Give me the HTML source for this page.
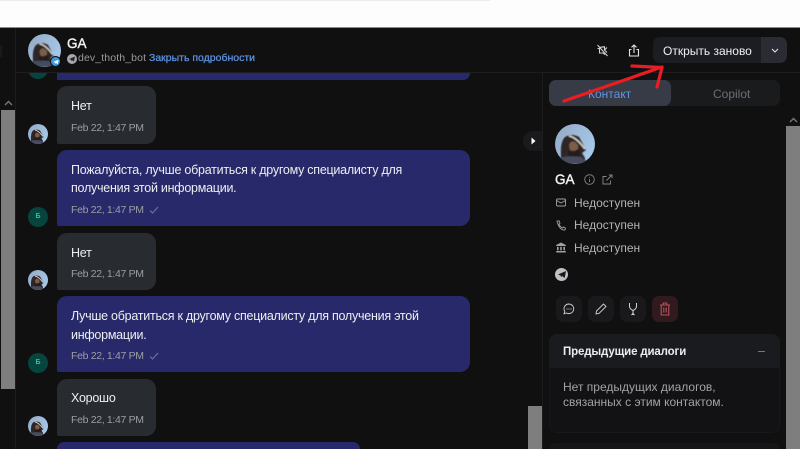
<!DOCTYPE html>
<html lang="ru">
<head>
<meta charset="utf-8">
<style>
html,body{margin:0;padding:0;background:#101011;}
body{width:800px;height:449px;position:relative;overflow:hidden;font-family:"Liberation Sans",sans-serif;color:#e8e8ea;}
.a{position:absolute;}
.t{position:absolute;white-space:nowrap;}
.b{position:absolute;border-radius:10px;}
.in{background:#282b2f;left:57px;width:99px;}
.out{background:#28296a;left:57px;width:413px;}
.msg{font-size:12.5px;line-height:15px;color:#eeeef0;letter-spacing:-.25px;left:71px;}
.time{font-size:10.5px;line-height:13px;color:#9d9ea3;letter-spacing:-.33px;left:71px;}
.sm{position:absolute;left:28px;width:20px;height:20px;}
.bot{position:absolute;left:28px;width:20px;height:20px;border-radius:50%;background:#07443d;color:#1fc79a;font-size:7px;font-weight:bold;text-align:center;line-height:20px;}
.un{font-size:12px;line-height:14px;color:#b2b3b7;left:574px;}
.ab{position:absolute;top:296px;width:26px;height:26px;border-radius:7px;background:#19191b;}
svg{position:absolute;overflow:visible;}
</style>
</head>
<body>
<svg width="0" height="0" style="position:absolute">
<defs>
<clipPath id="c"><circle cx="20" cy="20" r="20"/></clipPath>
<filter id="s"><feGaussianBlur stdDeviation=".6"/></filter>
<linearGradient id="sky" x1="0" y1="0" x2="1" y2=".6"><stop offset="0" stop-color="#93aac3"/><stop offset="1" stop-color="#a6c8ea"/></linearGradient>
<symbol id="av" viewBox="0 0 40 40">
<g clip-path="url(#c)">
<rect width="40" height="40" fill="url(#sky)"/>
<g filter="url(#s)">
<path d="M6 32 Q5 18 10 13 Q17 9 24 13 L28 20 L31 26 L27 29 L30 34 L30 40 L6 40Z" fill="#2f2726"/>
<path d="M14 21 Q16 16 20 18 Q24 20 23 25 Q19 28 15 26Z" fill="#7d5d4a"/>
<path d="M13 26 Q18 31 24 25 L25 31 Q18 35 14 33Z" fill="#231c1b"/>
<path d="M0 40 L3 34 Q14 31 26 33 L36 40Z" fill="#464c5e"/>
<path d="M14 12 Q21 13 30 25" stroke="#d0cbc2" stroke-width="1.800" fill="none"/>
</g>
</g>
</symbol>
</defs>
</svg>

<!-- browser strip -->
<div class="a" style="left:0;top:0;width:800px;height:27px;background:#fdfdfe;"></div>
<div class="a" style="left:0;top:0;width:490px;height:1px;background:#ececef;"></div>
<div class="a" style="left:0;top:27px;width:800px;height:1px;background:#8b8b8d;"></div>

<!-- left rail -->
<div class="a" style="left:15px;top:28px;width:1px;height:421px;background:#1d1d20;"></div>
<div class="a" style="left:1px;top:110px;width:14px;height:279px;background:#7e7e7e;"></div>
<svg style="left:4px;top:100px" width="9" height="6" viewBox="0 0 9 6"><path d="M1 5L4.500 1.500L8 5" stroke="#77777a" stroke-width="1.400" fill="none"/></svg>
<div class="a" style="left:0;top:45px;width:2px;height:12px;background:#1a1a1c;"></div>

<!-- chat messages -->
<div class="a" style="left:28px;top:62px;width:20px;height:17px;overflow:hidden"><div style="width:20px;height:20px;margin-top:-3px;border-radius:50%;background:#07443d"></div></div>
<div class="a" style="left:57px;top:73px;width:413px;height:7px;background:#28296a;border-radius:0 0 8px 0"></div>

<div class="b in" style="top:86px;height:58px;border-bottom-left-radius:2px"></div>
<div class="t msg" style="top:99px">Нет</div>
<div class="t time" style="top:122px">Feb 22, 1:47 PM</div>
<svg class="sm" style="left:28px;top:124px" viewBox="0 0 40 40"><use href="#av"/></svg>

<div class="b out" style="top:150px;height:76px;border-bottom-left-radius:2px"></div>
<div class="t msg" style="top:163px">Пожалуйста, лучше обратиться к другому специалисту для</div>
<div class="t msg" style="top:181px">получения этой информации.</div>
<div class="t time" style="top:204px">Feb 22, 1:47 PM</div>
<svg style="left:149px;top:206px" width="10" height="8" viewBox="0 0 10 8"><path d="M1 4.500L3.500 7L9 1" stroke="#75769c" stroke-width="1" fill="none"/></svg>
<div class="bot" style="top:207px">Б</div>

<div class="b in" style="top:233px;height:57px;border-bottom-left-radius:2px"></div>
<div class="t msg" style="top:246px">Нет</div>
<div class="t time" style="top:268px">Feb 22, 1:47 PM</div>
<svg class="sm" style="left:28px;top:270px" viewBox="0 0 40 40"><use href="#av"/></svg>

<div class="b out" style="top:296px;height:76px;border-bottom-left-radius:2px"></div>
<div class="t msg" style="top:309px">Лучше обратиться к другому специалисту для получения этой</div>
<div class="t msg" style="top:328px">информации.</div>
<div class="t time" style="top:350px">Feb 22, 1:47 PM</div>
<svg style="left:149px;top:352px" width="10" height="8" viewBox="0 0 10 8"><path d="M1 4.500L3.500 7L9 1" stroke="#75769c" stroke-width="1" fill="none"/></svg>
<div class="bot" style="top:353px">Б</div>

<div class="b in" style="top:379px;height:57px;border-bottom-left-radius:2px"></div>
<div class="t msg" style="top:391px">Хорошо</div>
<div class="t time" style="top:414px">Feb 22, 1:47 PM</div>
<svg class="sm" style="left:28px;top:416px" viewBox="0 0 40 40"><use href="#av"/></svg>

<div class="a" style="left:57px;top:442px;width:303px;height:7px;background:#28296a;border-radius:8px 8px 0 0"></div>

<!-- chat scrollbar -->
<div class="a" style="left:528px;top:406px;width:14px;height:43px;background:#7e7e7e;"></div>

<!-- toggle -->
<div class="a" style="left:523px;top:131px;width:19px;height:20px;background:#1a1a1c;border-radius:10px 0 0 10px;"></div>
<svg style="left:531px;top:137px" width="5" height="8" viewBox="0 0 5 8"><path d="M0.500 0.500L4.500 4L0.500 7.500Z" fill="#fff"/></svg>

<!-- header -->
<div class="a" style="left:16px;top:28px;width:784px;height:44px;background:#101011;"></div>
<div class="a" style="left:16px;top:72px;width:784px;height:1px;background:#1d1d20;"></div>
<svg style="left:28px;top:34px" width="33" height="33" viewBox="0 0 40 40"><use href="#av"/></svg>
<div class="a" style="left:50px;top:56px;width:9px;height:9px;border-radius:50%;background:#3f9bdc;border:1px solid #101011;"></div>
<svg style="left:52.500px;top:58.500px" width="6" height="6" viewBox="0 0 6 6"><path d="M0.300 3L5.600 0.800L4.700 5.200L3 4L2.200 4.800L2 3.600Z" fill="#fff"/></svg>
<div class="t" style="left:67px;top:36px;font-size:13.500px;-webkit-text-stroke:.4px #f2f2f4;color:#f2f2f4;">GA</div>
<div class="a" style="left:67px;top:54px;width:10px;height:10px;border-radius:50%;background:#a8a9ad;"></div>
<svg style="left:69px;top:56px" width="6" height="6" viewBox="0 0 6 6"><path d="M0 3L6 .5L5 5.500L3 4.200L2.200 5L2 3.700Z" fill="#26262a"/></svg>
<div class="t" style="left:78px;top:52px;font-size:10.500px;color:#9a9ba0;letter-spacing:.12px">dev_thoth_bot</div>
<div class="t" style="left:149px;top:52px;font-size:10.500px;color:#5b93e0;-webkit-text-stroke:.25px #5b93e0">Закрыть подробности</div>

<!-- header actions -->
<svg style="left:596px;top:44px" width="13" height="13" viewBox="0 0 13 13" fill="none" stroke="#d4d4d8" stroke-width="1.100"><path d="M1.500 1L11.500 12"/><path d="M1.500 4.500H3.500V9H7L9 10.500"/><path d="M3.500 3.500L5 3.200L8.500 2.800V6"/><path d="M11 3.500L8.500 6L11 8.500"/></svg>
<svg style="left:628px;top:44px" width="12" height="13" viewBox="0 0 12 13" fill="none" stroke="#e4e4e8" stroke-width="1.100"><path d="M6 9V1M3.500 3.300L6 1L8.500 3.300"/><path d="M3.500 5.500H1.500V12H10.500V5.500H8.500"/></svg>
<div class="a" style="left:653px;top:37px;width:108px;height:26px;background:#1c1d22;border-radius:7px 0 0 7px;"></div>
<div class="a" style="left:761px;top:37px;width:26px;height:26px;background:#2a2b33;border-radius:0 7px 7px 0;"></div>
<div class="t" style="left:663px;top:44px;font-size:12px;color:#f0f0f2;">Открыть заново</div>
<svg style="left:771px;top:48px" width="8" height="5" viewBox="0 0 8 5"><path d="M1 1L4 4L7 1" stroke="#e4e4e8" stroke-width="1.100" fill="none"/></svg>

<!-- tabs -->
<div class="a" style="left:549px;top:80px;width:231px;height:26px;background:#1a1b1d;border-radius:7px;"></div>
<div class="a" style="left:549px;top:80px;width:122px;height:26px;background:#373b46;border-radius:7px;"></div>
<div class="t" style="left:588px;top:87px;font-size:12px;color:#6095e0;">Контакт</div>
<div class="t" style="left:713px;top:87px;font-size:12px;color:#6e6f74;">Copilot</div>

<!-- panel divider and scrollbar -->
<div class="a" style="left:542px;top:73px;width:1px;height:376px;background:#1d1d20;"></div>
<div class="a" style="left:786px;top:126px;width:14px;height:323px;background:#7e7e7e;"></div>
<svg style="left:789px;top:117px" width="9" height="6" viewBox="0 0 9 6"><path d="M1 5L4.500 1.500L8 5" stroke="#77777a" stroke-width="1.400" fill="none"/></svg>

<!-- contact -->
<svg style="left:555px;top:124px" width="40" height="40" viewBox="0 0 40 40"><use href="#av"/></svg>
<div class="t" style="left:555px;top:172px;font-size:13.500px;-webkit-text-stroke:.4px #f4f4f6;color:#f4f4f6;">GA</div>
<svg style="left:584px;top:174px" width="11" height="11" viewBox="0 0 11 11" fill="none" stroke="#85868b" stroke-width=".9"><circle cx="5.500" cy="5.500" r="4.800"/><path d="M5.500 5V8M5.500 3V3.800"/></svg>
<svg style="left:602px;top:174px" width="11" height="11" viewBox="0 0 11 11" fill="none" stroke="#85868b" stroke-width=".9"><path d="M8.500 6.500V10H1V2.500H4.500"/><path d="M4.500 6.500L10 1M6.800 1H10V4.200"/></svg>

<svg style="left:556px;top:198px" width="10" height="9" viewBox="0 0 10 9" fill="none" stroke="#a0a1a6" stroke-width=".9"><rect x=".5" y="1" width="9" height="7" rx="1"/><path d="M.5 2.500L5 5L9.500 2.500"/></svg>
<svg style="left:556px;top:220px" width="10" height="11" viewBox="0 0 10 11" fill="none" stroke="#a0a1a6" stroke-width=".9"><path d="M1 1.200L3 .8L4 3.200L3 4.200Q4 6.700 6.500 8L7.500 7L9.500 8.200L9 10Q3.500 10.500 1 1.200Z"/></svg>
<svg style="left:556px;top:242px" width="10" height="11" viewBox="0 0 10 11" fill="#a0a1a6"><path d="M5 .5L9.800 3V4H.2V3Z"/><rect x="1" y="4.800" width="1.600" height="3.500"/><rect x="4.200" y="4.800" width="1.600" height="3.500"/><rect x="7.400" y="4.800" width="1.600" height="3.500"/><rect x=".2" y="9" width="9.600" height="1.500"/></svg>
<div class="t un" style="top:196px">Недоступен</div>
<div class="t un" style="top:218px">Недоступен</div>
<div class="t un" style="top:241px">Недоступен</div>

<div class="a" style="left:555px;top:268px;width:13px;height:13px;border-radius:50%;background:#c0c1c5;"></div>
<svg style="left:557.500px;top:271px" width="8" height="7" viewBox="0 0 8 7"><path d="M0 3.500L8 0L6.700 7L4 5L3 6.200L2.700 4.600Z" fill="#1a1a1d"/></svg>

<div class="ab" style="left:556px"></div>
<div class="ab" style="left:588px"></div>
<div class="ab" style="left:620px"></div>
<div class="ab" style="left:652px;background:#301a1e"></div>
<svg style="left:563px;top:303px" width="12" height="12" viewBox="0 0 12 12" fill="none" stroke="#d0d1d5" stroke-width=".9"><path d="M6 1A5 4.800 0 1 1 3.300 10L1 10.800L1.800 8.400A5 4.800 0 0 1 6 1Z"/><path stroke-width="1.200" d="M3.600 6H4.400M5.600 6H6.400M7.600 6H8.400"/></svg>
<svg style="left:595px;top:303px" width="12" height="12" viewBox="0 0 12 12" fill="none" stroke="#d0d1d5" stroke-width=".9"><path d="M1 11L1.500 8L8.500 1L11 3.500L4 10.500Z"/></svg>
<svg style="left:627px;top:302px" width="12" height="14" viewBox="0 0 12 14" fill="none" stroke="#d0d1d5" stroke-width="1"><path d="M2.500 1V4Q2.500 7 6 8.500Q9.500 7 9.500 4V1"/><path d="M6 8.500V11.500"/><path d="M4.500 13L6 11.500L7.500 13" fill="#d0d1d5"/></svg>
<svg style="left:659px;top:302px" width="12" height="14" viewBox="0 0 12 14" fill="none" stroke="#b5525a" stroke-width="1.100"><path d="M1 3H11M4.300 3V1H7.700V3"/><path d="M2.200 3V13H9.800V3"/><path d="M4.800 5.500V10.500M7.200 5.500V10.500"/></svg>

<!-- accordion -->
<div class="a" style="left:549px;top:334px;width:231px;height:99px;background:#121214;border-radius:8px;box-shadow:inset 0 0 0 1px #18181a;"></div>
<div class="a" style="left:549px;top:334px;width:231px;height:34px;background:#1a1b1e;border-radius:8px 8px 0 0;"></div>
<div class="t" style="left:563px;top:346px;font-size:11.500px;font-weight:bold;color:#ececee;letter-spacing:-.15px">Предыдущие диалоги</div>
<div class="a" style="left:758px;top:350.500px;width:7px;height:1.500px;background:#4f7fb8;"></div>
<div class="t" style="left:563px;top:380px;font-size:12px;color:#a2a3a8;">Нет предыдущих диалогов,</div>
<div class="t" style="left:563px;top:395px;font-size:12px;color:#a2a3a8;">связанных с этим контактом.</div>
<div class="a" style="left:549px;top:443px;width:231px;height:6px;background:#16161a;border-radius:8px 8px 0 0;"></div>

<!-- red annotation arrow -->
<svg style="left:0;top:0" width="800" height="449" viewBox="0 0 800 449" fill="none" stroke="#ea1c24" stroke-linecap="round" stroke-linejoin="round">
<path d="M564 101L662 67" stroke-width="3.200"/>
<path d="M632 66L662 67.500" stroke-width="3.200"/>
<path d="M662 67.500L657 87" stroke-width="3.200"/>
</svg>
</body>
</html>
